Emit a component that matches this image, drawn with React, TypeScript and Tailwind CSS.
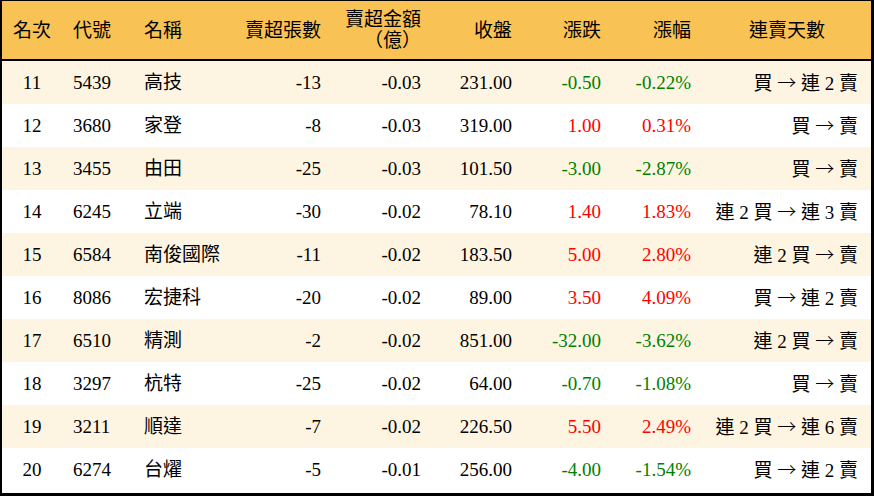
const rows = [
  { rank: 11, code: "5439", name: "高技", lots: "-13", amount: "-0.03", close: "231.00", change: "-0.50", pct: "-0.22%", streak: "買 → 連 2 賣" },
  { rank: 12, code: "3680", name: "家登", lots: "-8", amount: "-0.03", close: "319.00", change: "1.00", pct: "0.31%", streak: "買 → 賣" },
  { rank: 13, code: "3455", name: "由田", lots: "-25", amount: "-0.03", close: "101.50", change: "-3.00", pct: "-2.87%", streak: "買 → 賣" },
  { rank: 14, code: "6245", name: "立端", lots: "-30", amount: "-0.02", close: "78.10", change: "1.40", pct: "1.83%", streak: "連 2 買 → 連 3 賣" },
  { rank: 15, code: "6584", name: "南俊國際", lots: "-11", amount: "-0.02", close: "183.50", change: "5.00", pct: "2.80%", streak: "連 2 買 → 賣" },
  { rank: 16, code: "8086", name: "宏捷科", lots: "-20", amount: "-0.02", close: "89.00", change: "3.50", pct: "4.09%", streak: "買 → 連 2 賣" },
  { rank: 17, code: "6510", name: "精測", lots: "-2", amount: "-0.02", close: "851.00", change: "-32.00", pct: "-3.62%", streak: "連 2 買 → 賣" },
  { rank: 18, code: "3297", name: "杭特", lots: "-25", amount: "-0.02", close: "64.00", change: "-0.70", pct: "-1.08%", streak: "買 → 賣" },
  { rank: 19, code: "3211", name: "順達", lots: "-7", amount: "-0.02", close: "226.50", change: "5.50", pct: "2.49%", streak: "連 2 買 → 連 6 賣" },
  { rank: 20, code: "6274", name: "台燿", lots: "-5", amount: "-0.01", close: "256.00", change: "-4.00", pct: "-1.54%", streak: "買 → 連 2 賣" },
];

const grid = "grid grid-cols-[60px_73px_100px_95px_100px_91px_89px_90px_1fr] items-center";

// the arrow comes out small in Liberation Serif, so take the full-width one from the CJK font
const Streak = ({ text }: { text: string }) => {
  const [buy, sell] = text.split(" → ");
  return (
    <>
      {buy}{" "}
      <span className="font-['Noto_Sans_CJK_TC'] font-light">→</span>{" "}
      {sell}
    </>
  );
};

export default function App() {
  return (
    <div
      className="w-[874px] h-[496px] border-t border-l-2 border-r-[3px] border-b-[3px] border-black bg-white text-black text-[19px]"
      style={{ fontFamily: '"Liberation Serif", "Noto Sans CJK TC", serif' }}
    >
      <div className={`${grid} h-[60px] bg-[#f8c254] border-b-2 border-black leading-[21px]`}>
        <div className="text-center">名次</div>
        <div className="pl-[11px]">代號</div>
        <div className="pl-[9px]">名稱</div>
        <div className="text-right pr-[9px]">賣超張數</div>
        <div className="text-right pr-[9px]">
          賣超金額
          <br />
          （億）
        </div>
        <div className="text-right pr-[9px]">收盤</div>
        <div className="text-right pr-[9px]">漲跌</div>
        <div className="text-right pr-[9px]">漲幅</div>
        <div className="text-center pl-[3px]">連賣天數</div>
      </div>
      {rows.map((r, i) => {
        const up = !r.change.startsWith("-");
        const color = up ? "text-[#ff0000]" : "text-[#008000]";
        return (
          <div key={r.rank} className={`${grid} h-[43px] leading-none ${i % 2 === 0 ? "bg-[#fdf5e2]" : "bg-white"}`}>
            <div className="text-center">{r.rank}</div>
            <div className="pl-[11px]">{r.code}</div>
            <div className="pl-[9px]">{r.name}</div>
            <div className="text-right pr-[9px]">{r.lots}</div>
            <div className="text-right pr-[9px]">{r.amount}</div>
            <div className="text-right pr-[9px]">{r.close}</div>
            <div className={`text-right pr-[9px] ${color}`}>{r.change}</div>
            <div className={`text-right pr-[9px] ${color}`}>{r.pct}</div>
            <div className="text-right pr-[13px] whitespace-nowrap">
              <Streak text={r.streak} />
            </div>
          </div>
        );
      })}
    </div>
  );
}
